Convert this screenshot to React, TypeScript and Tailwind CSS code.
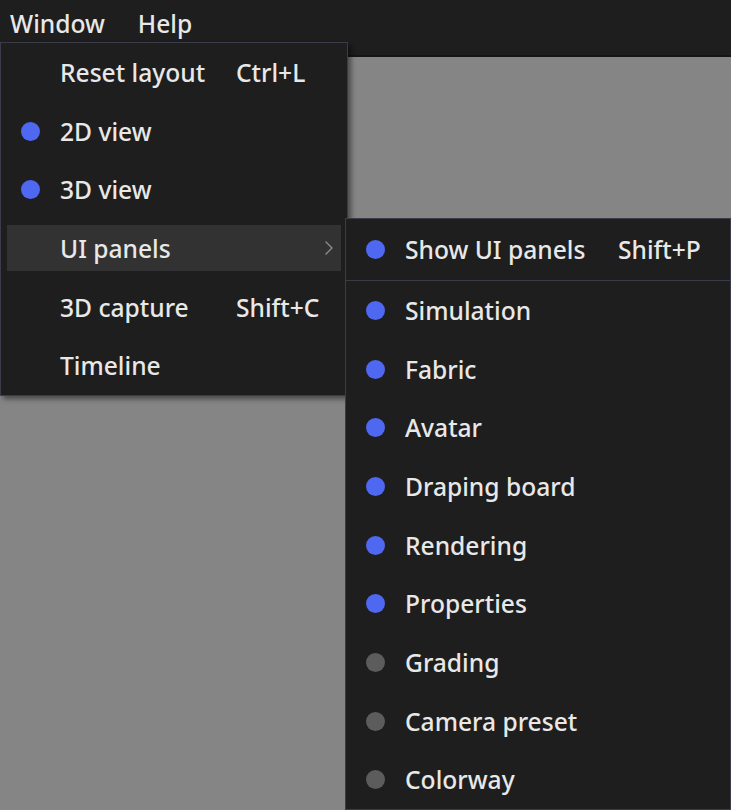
import { ChevronRight } from 'lucide-react';

type Item = {
  label: string;
  shortcut?: string;
  dot?: 'on' | 'off';
  submenu?: boolean;
  active?: boolean;
};

const windowItems: Item[] = [
  { label: 'Reset layout', shortcut: 'Ctrl+L' },
  { label: '2D view', dot: 'on' },
  { label: '3D view', dot: 'on' },
  { label: 'UI panels', submenu: true, active: true },
  { label: '3D capture', shortcut: 'Shift+C' },
  { label: 'Timeline' },
];

const panelItems: Item[] = [
  { label: 'Simulation', dot: 'on' },
  { label: 'Fabric', dot: 'on' },
  { label: 'Avatar', dot: 'on' },
  { label: 'Draping board', dot: 'on' },
  { label: 'Rendering', dot: 'on' },
  { label: 'Properties', dot: 'on' },
  { label: 'Grading', dot: 'off' },
  { label: 'Camera preset', dot: 'off' },
  { label: 'Colorway', dot: 'off' },
];

function Dot({ state }: { state?: 'on' | 'off' }) {
  if (!state) return null;
  return (
    <span
      className={
        state === 'on'
          ? 'block h-[19px] w-[19px] rounded-full bg-[#4f68f2]'
          : 'block h-[19px] w-[19px] rounded-full bg-[#5c5c5c]'
      }
    />
  );
}

function MenuRow({ item, shortcutX }: { item: Item; shortcutX: number }) {
  return (
    <div className="flex h-[58.7px] items-center px-[6px]">
      <div
        className={
          'flex h-[46px] flex-1 items-center ' +
          (item.active ? 'bg-[#323232]' : '')
        }
      >
        <div className="w-[53px] pl-[14px]">
          <Dot state={item.dot} />
        </div>
        <span
          className="whitespace-nowrap pt-[2px]"
          style={{ width: shortcutX }}
        >
          {item.label}
        </span>
        {item.shortcut && (
          <span className="whitespace-nowrap pt-[2px]">{item.shortcut}</span>
        )}
        {item.submenu && (
          <ChevronRight
            className="ml-auto mr-0 text-[#8c8c8c]"
            size={24}
            strokeWidth={1.4}
          />
        )}
      </div>
    </div>
  );
}

export default function App() {
  return (
    <div
      className="relative h-[810px] w-[731px] overflow-hidden bg-[#848584] text-[24.6px] font-medium text-[#e8e8e8]"
      style={{ fontFamily: '"Noto Sans", "Open Sans", sans-serif' }}
    >
      {/* Menu bar */}
      <div className="flex h-[57px] items-start gap-[33px] border-b-2 border-[#151515] bg-[#1e1e1e] pl-[10px] pt-[6px]">
        <span>Window</span>
        <span>Help</span>
      </div>

      {/* Window dropdown */}
      <div className="absolute left-0 top-[42px] w-[348px] border border-[#3a3c4a] bg-[#1e1e1e] shadow-[3px_3px_5px_rgba(0,0,0,0.45)]">
        {windowItems.map((item) => (
          <MenuRow key={item.label} item={item} shortcutX={176} />
        ))}
      </div>

      {/* UI panels submenu */}
      <div className="absolute left-[345px] top-[218px] w-[386px] border border-[#3a3c4a] bg-[#1e1e1e]">
        <div className="h-[61px] pt-[1px]">
          <MenuRow
            item={{ label: 'Show UI panels', shortcut: 'Shift+P', dot: 'on' }}
            shortcutX={213}
          />
        </div>
        <div className="h-px bg-[#3a3c4a]" />
        {panelItems.map((item) => (
          <MenuRow key={item.label} item={item} shortcutX={213} />
        ))}
      </div>
    </div>
  );
}
